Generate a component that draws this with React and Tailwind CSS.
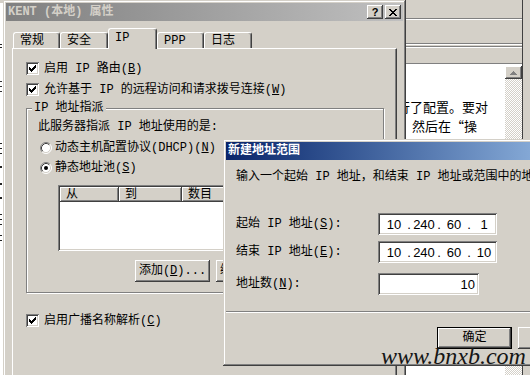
import React, { Fragment } from 'react';

const WIN = "shadow-[inset_-1px_-1px_#404040,inset_1px_1px_#d4d0c8,inset_-2px_-2px_#808080,inset_2px_2px_#ffffff]";
const RAISED = "shadow-[inset_-1px_-1px_#404040,inset_1px_1px_#ffffff,inset_-2px_-2px_#808080,inset_2px_2px_#d4d0c8]";
const SUNKEN = "shadow-[inset_1px_1px_#808080,inset_-1px_-1px_#ffffff,inset_2px_2px_#404040,inset_-2px_-2px_#d4d0c8]";

function CheckBox() {
  return (
    <span className={`w-[13px] h-[13px] shrink-0 bg-white flex items-center justify-center ${SUNKEN}`}>
      <svg width="7" height="7" viewBox="0 0 7 7" shapeRendering="crispEdges">
        <path
          d="M6 0h1v1h-1z M5 1h2v1h-2z M0 2h1v1h-1z M4 2h3v1h-3z M0 3h2v1h-2z M3 3h3v1h-3z M0 4h5v1h-5z M1 5h3v1h-3z M2 6h1v1h-1z"
          fill="#000"
        />
      </svg>
    </span>
  );
}

function Radio({ on }) {
  return (
    <svg width="12" height="12" viewBox="0 0 12 12" className="shrink-0">
      <circle cx="6" cy="6" r="5" fill="#fff" />
      <path d="M2.11 9.89A5.5 5.5 0 0 1 9.89 2.11" stroke="#808080" fill="none" />
      <path d="M9.89 2.11A5.5 5.5 0 0 1 2.11 9.89" stroke="#ffffff" fill="none" />
      <path d="M2.82 9.18A4.5 4.5 0 0 1 9.18 2.82" stroke="#404040" fill="none" />
      <path d="M9.18 2.82A4.5 4.5 0 0 1 2.82 9.18" stroke="#d4d0c8" fill="none" />
      {on && <circle cx="6" cy="6" r="2" fill="#000" />}
    </svg>
  );
}

function Btn({ children, def }) {
  return (
    <div
      className={`w-[75px] h-[22px] shrink-0 bg-[#d4d0c8] flex items-center justify-center leading-[12px] whitespace-nowrap ${def ? "border border-black" : ""} ${RAISED}`}
    >
      {children}
    </div>
  );
}

function TitleBtn({ children }) {
  return (
    <div className={`w-[16px] h-[14px] bg-[#d4d0c8] ${RAISED} flex items-center justify-center`}>
      {children}
    </div>
  );
}

function XGlyph() {
  return (
    <svg width="8" height="7" viewBox="0 0 8 7" shapeRendering="crispEdges">
      <path
        d="M0 0h2v1H0z M6 0h2v1H6z M1 1h2v1H1z M5 1h2v1H5z M2 2h4v1H2z M3 3h2v1H3z M2 4h4v1H2z M1 5h2v1H1z M5 5h2v1H5z M0 6h2v1H0z M6 6h2v1H6z"
        fill="#000"
      />
    </svg>
  );
}

function Tab({ label, w, active }) {
  if (active) {
    return (
      <div
        className={`relative z-10 -mb-px h-[21px] ${w} bg-[#d4d0c8] border-t border-l border-white border-r border-r-[#404040] rounded-t-[3px] shadow-[inset_-1px_0_#808080] pl-[6px] pt-[3px] leading-[12px]`}
      >
        {label}
      </div>
    );
  }
  return (
    <div
      className={`h-[16px] ${w} bg-[#d4d0c8] border-t border-l border-white border-r border-r-[#404040] rounded-t-[3px] shadow-[inset_-1px_0_#808080] pl-[6px] pt-[2px] leading-[12px]`}
    >
      {label}
    </div>
  );
}

function IpField({ parts }) {
  return (
    <div
      className={`w-[119px] h-[22px] shrink-0 bg-white ${SUNKEN} flex items-center pl-[4px] font-[family-name:Liberation_Sans,Arial,sans-serif] text-[13px] leading-[13px]`}
    >
      {parts.map((p, i) => (
        <Fragment key={i}>
          {i > 0 && <span className="w-[6px] text-center">.</span>}
          <span className="w-[24px] text-center">{p}</span>
        </Fragment>
      ))}
    </div>
  );
}

function HeaderCell({ w, children }) {
  return (
    <div className={`${w} h-full shrink-0 bg-[#d4d0c8] ${RAISED} pl-[6px] flex items-center`}>{children}</div>
  );
}

export default function App() {
  return (
    <div className="relative w-[530px] h-[375px] overflow-hidden bg-[#d4d0c8] text-black text-[12px] font-[family-name:Liberation_Mono,Noto_Sans_CJK_SC,monospace]">
      {/* left strip: window behind */}
      <div className="absolute left-0 top-0 w-[3px] h-[375px] bg-white">
        <svg width="3" height="375" shapeRendering="crispEdges">
          <rect x="0" y="0" width="3" height="3" fill="#d4d0c8" />
          <rect x="0" y="44" width="2" height="1" fill="#222" />
          <rect x="0" y="47" width="2" height="1" fill="#222" />
          <rect x="0" y="81" width="2" height="1" fill="#333" />
          <rect x="0" y="86" width="2" height="1" fill="#333" />
          <rect x="0" y="91" width="2" height="1" fill="#333" />
          <rect x="0" y="143" width="2" height="1" fill="#222" />
          <rect x="0" y="148" width="2" height="1" fill="#222" />
          <rect x="0" y="153" width="2" height="1" fill="#222" />
          <rect x="0" y="166" width="2" height="2" fill="#222" />
          <rect x="0" y="183" width="2" height="2" fill="#222" />
          <rect x="0" y="197" width="2" height="2" fill="#222" />
          <rect x="0" y="214" width="2" height="1" fill="#222" />
          <rect x="0" y="219" width="2" height="1" fill="#222" />
          <rect x="0" y="224" width="2" height="1" fill="#222" />
          <rect x="0" y="235" width="2" height="1" fill="#222" />
          <rect x="0" y="240" width="2" height="1" fill="#222" />
        </svg>
      </div>

      {/* right background window */}
      <div className="absolute left-[390px] top-0 w-[140px] h-[375px] bg-[#d4d0c8] flex">
        <div className="w-[133px] h-full flex flex-col border-r border-[#404040]">
          <div className="h-[18px] shrink-0" />
          <div className="h-px shrink-0 bg-[#808080]" />
          <div className="h-px shrink-0 bg-white" />
          <div className="h-[23px] shrink-0" />
          <div className="h-px shrink-0 bg-[#808080]" />
          <div className="h-px shrink-0 bg-white" />
          <div className="h-px shrink-0" />
          <div className="h-px shrink-0 bg-[#808080]" />
          <div className="h-px shrink-0 bg-white" />
          <div className="h-[15px] shrink-0" />
          <div className="h-px shrink-0 bg-[#808080]" />
          <div className="flex-1 flex bg-white">
            <div className="flex-1 pt-[33px] font-[family-name:Noto_Sans_CJK_SC,sans-serif] text-[13px] leading-[19px] whitespace-nowrap overflow-hidden">
              <div className="pl-[7px]">行了配置。要对</div>
              <div className="pl-[9px]">，然后在“操</div>
            </div>
            <div className="w-[17px] flex flex-col">
              <div className={`mt-[2px] h-[13px] shrink-0 bg-[#d4d0c8] ${RAISED} flex items-center justify-center`}>
                <svg width="7" height="4" viewBox="0 0 7 4" shapeRendering="crispEdges">
                  <path d="M3 0h1v1h1v1h1v1h1v1H0V3h1V2h1V1h1z" fill="#808080" />
                </svg>
              </div>
              <div className="flex-1 bg-[repeating-conic-gradient(#d4d0c8_0_25%,#ffffff_0_50%)] bg-[length:2px_2px]" />
            </div>
          </div>
        </div>
      </div>

      {/* main properties dialog */}
      <div className={`absolute left-[3px] top-0 w-[403px] h-[420px] bg-[#d4d0c8] p-[3px] flex flex-col ${WIN}`}>
        <div className="h-[18px] shrink-0 flex items-center bg-linear-to-r from-[#808080] to-[#c0c0c0] pl-[2px] pr-[2px]">
          <span className="font-bold text-[#d4d0c8] leading-[12px] whitespace-nowrap">KENT (本地) 属性</span>
          <div className="ml-auto flex gap-[2px]">
            <TitleBtn>
              <span className="font-[family-name:Liberation_Sans,Arial,sans-serif] font-bold text-[11px] leading-[11px]">?</span>
            </TitleBtn>
            <TitleBtn>
              <XGlyph />
            </TitleBtn>
          </div>
        </div>

        <div className="flex flex-col px-[6px] pt-[7px]">
          <div className="flex items-end h-[20px] pl-px">
            <Tab label="常规" w="w-[47px]" />
            <Tab label="安全" w="w-[48px]" />
            <Tab label="IP" w="w-[49px]" active />
            <Tab label="PPP" w="w-[47px]" />
            <Tab label="日志" w="w-[48px]" />
          </div>

          <div className="h-[360px] border-t border-l border-white border-r border-b border-r-[#404040] border-b-[#404040] shadow-[inset_-1px_-1px_#808080] pl-[13px] pr-[12px] pt-[13px] flex flex-col">
            <div className="flex items-center gap-[5px] h-[13px] leading-[12px] whitespace-nowrap">
              <CheckBox />
              <span>启用 IP 路由(<u>B</u>)</span>
            </div>
            <div className="mt-[8px] flex items-center gap-[5px] h-[13px] leading-[12px] whitespace-nowrap">
              <CheckBox />
              <span>允许基于 IP 的远程访问和请求拨号连接(<u>W</u>)</span>
            </div>

            <div className="relative mt-[12px] border border-[#808080] shadow-[inset_1px_1px_#ffffff,1px_1px_#ffffff] pt-[12px] pl-[11px] pr-[11px] pb-[10px] flex flex-col">
              <span className="absolute -top-[7px] left-[5px] px-[2px] bg-[#d4d0c8] leading-[12px] whitespace-nowrap">IP 地址指派</span>
              <div className="leading-[12px] whitespace-nowrap">此服务器指派 IP 地址使用的是:</div>
              <div className="mt-[9px] pl-[2px] flex items-center gap-[3px] h-[12px] leading-[12px] whitespace-nowrap">
                <Radio />
                <span>动态主机配置协议(DHCP)(<u>N</u>)</span>
              </div>
              <div className="mt-[8px] pl-[2px] flex items-center gap-[3px] h-[12px] leading-[12px] whitespace-nowrap">
                <Radio on />
                <span>静态地址池(<u>S</u>)</span>
              </div>
              <div className={`mt-[11px] ml-[20px] h-[66px] bg-white p-[2px] ${SUNKEN} flex flex-col`}>
                <div className="flex h-[15px] leading-[12px]">
                  <HeaderCell w="w-[59px]">从</HeaderCell>
                  <HeaderCell w="w-[63px]">到</HeaderCell>
                  <HeaderCell w="w-[63px]">数目</HeaderCell>
                  <div className={`flex-1 h-full bg-[#d4d0c8] ${RAISED}`} />
                </div>
              </div>
              <div className="mt-[9px] flex justify-end gap-[6px]">
                <Btn>添加(<u>D</u>)...</Btn>
                <Btn>编辑(<u>E</u>)...</Btn>
                <Btn>删除(<u>R</u>)</Btn>
              </div>
            </div>

            <div className="mt-[21px] flex items-center gap-[5px] h-[13px] leading-[12px] whitespace-nowrap">
              <CheckBox />
              <span>启用广播名称解析(<u>C</u>)</span>
            </div>
          </div>
        </div>
      </div>

      {/* new address range dialog */}
      <div className={`absolute left-[223px] top-[139px] w-[385px] h-[227px] bg-[#d4d0c8] p-[3px] flex flex-col ${WIN}`}>
        <div className="h-[18px] shrink-0 flex items-center bg-linear-to-r from-[#0a246a] to-[#a6caf0] pl-[2px]">
          <span className="text-white font-bold leading-[12px] whitespace-nowrap">新建地址范围</span>
        </div>
        <div className="flex flex-col pl-[10px] pr-[12px]">
          <div className="mt-[11px] leading-[12px] whitespace-nowrap">输入一个起始 IP 地址，和结束 IP 地址或范围中的地址数。</div>
          <div className="mt-[30px] flex items-center leading-[12px] whitespace-nowrap">
            <span className="w-[142px] shrink-0">起始 IP 地址(<u>S</u>):</span>
            <IpField parts={["10", "240", "60", "1"]} />
          </div>
          <div className="mt-[6px] flex items-center leading-[12px] whitespace-nowrap">
            <span className="w-[142px] shrink-0">结束 IP 地址(<u>E</u>):</span>
            <IpField parts={["10", "240", "60", "10"]} />
          </div>
          <div className="mt-[10px] flex items-center leading-[12px] whitespace-nowrap">
            <span className="w-[142px] shrink-0">地址数(<u>N</u>):</span>
            <div
              className={`w-[101px] h-[22px] shrink-0 bg-white ${SUNKEN} flex items-center justify-end pr-[4px] font-[family-name:Liberation_Sans,Arial,sans-serif] text-[13px] leading-[13px]`}
            >
              10
            </div>
          </div>
        </div>
        <div className="mt-[16px] h-px shrink-0 bg-[#808080]" />
        <div className="h-px shrink-0 bg-white" />
        <div className="pt-[14px] flex justify-end gap-[6px] pr-[12px]">
          <Btn def>确定</Btn>
          <Btn>取消</Btn>
        </div>
      </div>

      {/* watermark */}
      <div className="absolute left-[381px] top-[344px] font-[family-name:Liberation_Serif,serif] italic text-[24px] leading-[24px] text-[#151515] whitespace-nowrap">
        www.bnxb.com
      </div>
    </div>
  );
}
